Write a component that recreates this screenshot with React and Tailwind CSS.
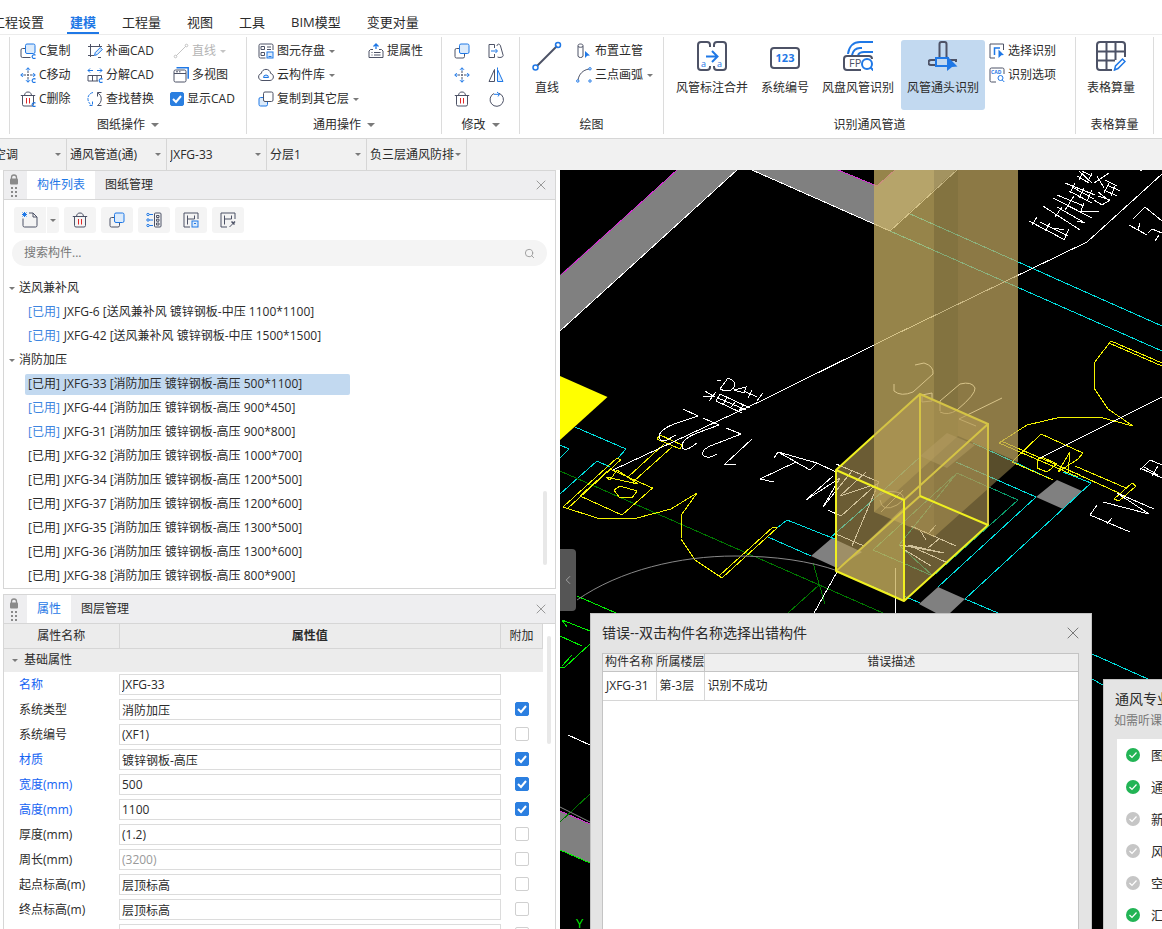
import React, { useState } from 'react';
import { X, Search, ChevronLeft } from 'lucide-react';

const DARK = '#4d5266';
const BLUE = '#1f78e6';
const PALE = '#dcebfb';

// Shared wrapper for the line icons, everything inside inherits the dark stroke
const Svg = ({ size = 16, box = 16, w = 1, children }) => (
  <svg width={size} height={size} viewBox={`0 0 ${box} ${box}`} fill="none" stroke={DARK} strokeWidth={w} className="shrink-0" aria-hidden="true">
    {children}
  </svg>
);

// Small blue "c" mark in the corner of the CAD commands
const CMark = () => <path d="M15.5 12.2c-1.6-1.2-3.6 0-3.3 1.8.3 1.5 2 2 3.3 1" stroke={BLUE} strokeWidth="1.2" />;

const CopyIcon = ({ c }) => (
  <Svg>
    <path d={c ? 'M5 5.500H2.500A1.500 1.500 0 0 0 1 7v6a1.500 1.500 0 0 0 1.500 1.500h8' : 'M5 5.500H2.500A1.500 1.500 0 0 0 1 7v6.500A1.500 1.500 0 0 0 2.500 15H9a1.500 1.500 0 0 0 1.500-1.500V11'} />
    <rect x="5.500" y="1" width="9.500" height="9.500" rx="1.500" fill={PALE} stroke={BLUE} />
    {c && <CMark />}
  </Svg>
);

const MoveIcon = ({ c }) => (
  <Svg>
    <path d="M8 4v8M4 8h8" strokeDasharray="2 1" />
    <path d="M8 .8v3M8 12.200v3M.8 8h3M12.200 8h3M6 2.800 8 .8l2 2M6 13.200l2 2 2-2M2.800 6l-2 2 2 2M13.200 6l2 2-2 2" stroke={BLUE} />
    {c && <CMark />}
  </Svg>
);

const TrashIcon = ({ c }) => (
  <Svg>
    <path d="M.8 4.500h14.400M4.500 4.300C5 1.800 6 1 8 1s3 .8 3.500 3.300M2.500 4.500v9A1.500 1.500 0 0 0 4 15h8a1.500 1.500 0 0 0 1.500-1.500v-9" />
    <path d="M6.500 7v5.500M9.500 7v5.500" stroke="#e02828" />
    {c && <CMark />}
  </Svg>
);

const DrawCadIcon = () => (
  <Svg>
    <path d="M3.500 1v13M1 3.500h14M12.500 1v3M1 12.500h6M14 14.500h-3" />
    <path d="m7.500 12.500.8-3 5-5 2 2-5 5z" stroke={BLUE} fill={PALE} />
  </Svg>
);

const SplitCadIcon = () => (
  <Svg>
    <path d="M1 3.500h5M3 1.500l-2 2 2 2M10 3.500h5M13 1.500l2 2-2 2" stroke={BLUE} />
    <path d="M1 14V8.500h13.500V11M1 14h10M5.500 8.500V14M10 8.500V14" />
    <CMark />
  </Svg>
);

const SwapIcon = () => (
  <Svg>
    <path d="M6 1.500C-.5 3-.5 11 4.500 14M5.500 10.500V14.500H1.500" stroke={BLUE} strokeDasharray="3 1" />
    <path d="M10.500 5.500v-4h4M10.500 2c5 2 5 9.500 0 12.500h4" />
  </Svg>
);

const LineIcon = () => (
  <Svg>
    <path d="m3 13 10-10" stroke="#c4c4c4" />
    <circle cx="2.500" cy="13.500" r="1.300" stroke="#c4c4c4" />
    <circle cx="13.500" cy="2.500" r="1.300" stroke="#c4c4c4" />
  </Svg>
);

const ViewsIcon = () => (
  <Svg>
    <path d="M3.500.8h11.700v11" stroke={BLUE} strokeWidth="1.500" />
    <rect x="1" y="3" width="12" height="12" rx="1.500" />
    <path d="M1 6.500h12M3 4.800h2M6 4.800h1.500" />
  </Svg>
);

const StoreIcon = () => (
  <Svg>
    <path d="M7.500 15H2.500A1.500 1.500 0 0 1 1 13.500v-11A1.500 1.500 0 0 1 2.500 1h11A1.500 1.500 0 0 1 15 2.500V7M3 3.500h3.500v3H3zM3 9.500h3.500v3H3zM9 4h4M9 6.500h4" />
    <rect x="9" y="9" width="6" height="6" fill={PALE} stroke={BLUE} />
    <path d="M10.500 13.500h3" stroke={BLUE} />
  </Svg>
);

const CloudIcon = () => (
  <Svg>
    <path d="M4 13.500C-.5 13-.3 7 3.300 6.500 4 1 12 1 12.700 6.500c3.600.5 3.800 6.500-.7 7z" />
    <path d="M5.500 10.500h5a2.500 2.500 0 0 0-5 0z" fill={PALE} stroke={BLUE} />
  </Svg>
);

const CopyToIcon = () => (
  <Svg>
    <path d="M5 6.500H2.500A1.500 1.500 0 0 0 1 8v5.500A1.500 1.500 0 0 0 2.500 15H8a1.500 1.500 0 0 0 1.500-1.500V11" stroke={BLUE} fill={PALE} />
    <rect x="5.500" y="1" width="9.500" height="9.500" rx="1.500" fill="#fff" />
  </Svg>
);

const LiftIcon = () => (
  <Svg>
    <path d="M8 6V1M5.500 3.500 8 1l2.500 2.500" stroke={BLUE} strokeWidth="1.300" />
    <path d="M5 6.500H2.500L1 8v6.500h14V8l-1.500-1.500H11M3.500 9.500h1M6 9.500h6.500M3.500 12h1M6 12h6.500" />
  </Svg>
);

const StretchIcon = () => (
  <Svg>
    <path d="M6.500 1.500H1v13h5.500M6.500 1.500V5M6.500 11v3.500M9 3c0-2.500 3-2.500 3.500 0l2.700 9.500c0 2-4 2.500-5.700 1.500" />
    <path d="M3 8h6M7.500 6l2 2-2 2" stroke={BLUE} />
  </Svg>
);

const MirrorIcon = () => (
  <Svg>
    <path d="M6.500 2.500v12H1z" />
    <path d="M9.500 2.500v12H15zM9.500 .5v2" stroke={BLUE} fill={PALE} />
  </Svg>
);

const RotateIcon = () => (
  <Svg>
    <path d="M11 2.300a6.700 6.700 0 1 1-5 .2" />
    <path d="M6 3.300h5M9 1l2.500 2.200L10 5.500" stroke={BLUE} />
  </Svg>
);

const PipeIcon = () => (
  <Svg>
    <path d="M2 2.500v10.500c0 2 5 2 5 0V2.500c0-2-5-2-5 0zM2 3.500c1 1 4 1 5 0" />
    <path d="M9 8l5 4.500-2.800.3L9 15z" fill={BLUE} stroke="none" />
  </Svg>
);

const ArcIcon = () => (
  <Svg>
    <path d="M2 13C3 7 7 3 13 2" />
    <g stroke={BLUE} fill="#fff">
      <circle cx="1.800" cy="14" r="1.200" />
      <circle cx="14" cy="1.800" r="1.200" />
      <circle cx="14" cy="14" r="1.200" />
    </g>
  </Svg>
);

const PickIcon = () => (
  <Svg>
    <path d="M6 15H1V1h13.500v6" />
    <path d="M5.500 12V5H11" stroke={BLUE} strokeWidth="1.500" />
    <path d="M9.500 6.500l5.500 5.500-2.700.3-2.800 2.700z" fill={BLUE} stroke="none" />
  </Svg>
);

const OptionIcon = () => (
  <Svg>
    <path d="M7 15H2.500A1.500 1.500 0 0 1 1 13.500v-11A1.500 1.500 0 0 1 2.500 1h11A1.500 1.500 0 0 1 15 2.500V7" />
    <text x="2" y="7" fontSize="5" fontWeight="700" fill={BLUE} stroke="none">CAD</text>
    <circle cx="11.500" cy="11" r="2.500" stroke={BLUE} />
    <path d="m13.300 13 2 2" stroke={BLUE} />
  </Svg>
);

const BigLineIcon = () => (
  <Svg size={30} box={30} w={2}>
    <path d="M5 25 25 5" />
    <circle cx="3.500" cy="26.500" r="2.500" stroke={BLUE} strokeWidth="1.500" />
    <circle cx="26" cy="4" r="2.500" stroke={BLUE} strokeWidth="1.500" />
  </Svg>
);

const MergeIcon = () => (
  <Svg size={30} box={30} w={2}>
    <path d="M13 6V4a3 3 0 0 0-3-3H4a3 3 0 0 0-3 3v22a3 3 0 0 0 3 3h6a3 3 0 0 0 3-3v-1M17 6V4a3 3 0 0 1 3-3h6a3 3 0 0 1 3 3v22a3 3 0 0 1-3 3h-6a3 3 0 0 1-3-3v-1" />
    <path d="M9 15.500h11M15 10l5.500 5.500L15 21" stroke={BLUE} />
    <g fontSize="9" fill={BLUE} stroke="none">
      <text x="4" y="26">a</text>
      <text x="20" y="26">a</text>
    </g>
  </Svg>
);

const NumberIcon = () => (
  <Svg size={30} box={30} w={2}>
    <rect x="1" y="7" width="28" height="20" rx="3" />
    <text x="15" y="21" fontSize="11" fontWeight="700" textAnchor="middle" fill={BLUE} stroke="none">123</text>
  </Svg>
);

const FpIcon = () => (
  <Svg size={30} box={30} w={2}>
    <path d="M5 13C6 5 11 1 17 1h13M9 14c1-4 4-7 8-7h2M15 14c1-2 3-3 6-3h9" stroke={BLUE} />
    <path d="M18 29H4a3 3 0 0 1-3-3v-8a3 3 0 0 1 3-3h22a3 3 0 0 1 3 3" />
    <text x="6" y="26" fontSize="11" fill={DARK} stroke="none">FP</text>
    <circle cx="24" cy="23" r="5" stroke={BLUE} fill="#fff" />
    <path d="m27.500 26.500 3 3" stroke={BLUE} />
  </Svg>
);

const JointIcon = () => (
  <Svg size={30} box={30} w={2}>
    <path d="M11.500 16V3a2 2 0 0 1 2-2h3a2 2 0 0 1 2 2v13M7 19H3a2.300 2.300 0 0 0 0 5h4M22 19h6v2" />
    <rect x="8" y="17" width="12" height="8" fill="#c2d9f0" stroke={BLUE} />
    <path d="M19 15l10.500 10.500-5.500.5-5 4z" fill={BLUE} stroke="none" />
  </Svg>
);

const GridEditIcon = () => (
  <Svg size={30} box={30} w={2}>
    <path d="M16 29H4a3 3 0 0 1-3-3V4a3 3 0 0 1 3-3h22a3 3 0 0 1 3 3v12M1 10.500h28M1 19.500h18M10.500 1v28M19.500 1v18" />
    <path d="m18.500 29 1-4 7-7 2.500 2.500-7 7z" stroke={BLUE} strokeWidth="1.500" />
  </Svg>
);

const NewIcon = () => (
  <Svg>
    <path d="M1 6.500v7A1.500 1.500 0 0 0 2.500 15h11a1.500 1.500 0 0 0 1.500-1.500V5l-4-4H7M11 1v4h4" />
    <path d="m.5 .5 4 4M4.500.5l-4 4M2.500 0v5M0 2.500h5" stroke={BLUE} />
  </Svg>
);

const BatchIcon = () => (
  <Svg>
    <path d="M2 2.500h5M2 8h5M2 13.500h5" stroke={BLUE} />
    <g stroke={BLUE} fill="#f4f4f4">
      <circle cx="2" cy="2.500" r="1.200" /><circle cx="2" cy="8" r="1.200" /><circle cx="2" cy="13.500" r="1.200" />
    </g>
    <rect x="8.500" y="1" width="6.500" height="14" rx="1" />
    <path d="M10.500 3.500h2.500v2h-2.500zM10.500 7.200h2.500v2h-2.500zM10.500 11h2.500v2h-2.500z" />
  </Svg>
);

const SaveTplIcon = () => (
  <Svg>
    <path d="M7 15H1V1h14v6M4.500 12.500v-9M4.500 7h7M11.500 3.500V7" />
    <rect x="9" y="9" width="6" height="6" fill={PALE} stroke={BLUE} />
    <path d="M11 11.500h2" stroke={BLUE} />
  </Svg>
);

const PickTplIcon = () => (
  <Svg>
    <path d="M7 15H1V1h14v6M4.500 12.500v-9M4.500 7h7M11.500 3.500V7M9.500 15l4-4" />
    <path d="M11.500 9.500l3 3M13 11.500l2-2" strokeWidth="1.500" />
  </Svg>
);

const Caret = ({ big, light }) => (
  <svg width={big ? 8 : 6} height={big ? 4 : 3} viewBox="0 0 8 4" className="shrink-0" aria-hidden="true">
    <path d="M0 0h8L4 4z" fill={light ? '#c4c4c4' : '#7a7a7a'} />
  </svg>
);

const Check = ({ checked, label }) => {
  const [on, setOn] = useState(!!checked);
  return (
    <span className="relative inline-flex h-[14px] w-[14px] shrink-0">
      <input
        type="checkbox"
        aria-label={label}
        checked={on}
        onChange={e => setOn(e.target.checked)}
        className="h-full w-full appearance-none rounded-[2px] border border-[#d0d0d0] bg-white checked:border-[#2b7fe0] checked:bg-[#2b7fe0]"
      />
      {on && (
        <svg viewBox="0 0 14 14" className="pointer-events-none absolute inset-0" fill="none" stroke="#fff" strokeWidth="2">
          <path d="m3 7 3 3 5-6" />
        </svg>
      )}
    </span>
  );
};

const Tool = ({ icon, text, caret, off }) => (
  <button type="button" className={'flex h-6 items-center gap-[3px] whitespace-nowrap ' + (off ? 'text-[#b4b4b4]' : '')}>
    {icon}
    <span>{text}</span>
    {caret && <span className="ml-px"><Caret light={off} /></span>}
  </button>
);

const BigTool = ({ icon, text, active }) => (
  <button type="button" className={'flex h-[70px] flex-col items-center gap-[7px] rounded-[3px] px-[6px] pt-px whitespace-nowrap ' + (active ? 'bg-[#c2d9f0]' : '')}>
    {icon}
    <span className="leading-5">{text}</span>
  </button>
);

const Group = ({ title, caret, className, children }) => (
  <section className={'flex shrink-0 flex-col border-r border-[#dcdcdc] ' + className}>
    <div className="flex flex-1 pt-[2px]">{children}</div>
    <div className="flex h-[19px] items-center justify-center gap-[6px]">
      {title}
      {caret && <Caret big />}
    </div>
  </section>
);

const menus = ['工程设置', '建模', '工程量', '视图', '工具', 'BIM模型', '变更对量'];
const filters = [
  ['专业', '通风空调'],
  ['构件类型', '通风管道(通)'],
  ['构件', 'JXFG-33'],
  ['分层', '分层1'],
  ['图纸', '负三层通风防排'],
];

const Ribbon = () => (
  <div className="flex shrink-0 overflow-hidden border-b border-[#d6d6d6] bg-white pt-[2px] pb-1 pl-[9px]">
    <div className="w-px shrink-0 bg-[#dcdcdc]" />
    <Group title="图纸操作" caret className="h-[97px] w-[237px]">
      <div className="ml-[10px] w-[67px]">
        <Tool icon={<CopyIcon c />} text="C复制" />
        <Tool icon={<MoveIcon c />} text="C移动" />
        <Tool icon={<TrashIcon c />} text="C删除" />
      </div>
      <div className="w-[83px]">
        <Tool icon={<DrawCadIcon />} text="补画CAD" />
        <Tool icon={<SplitCadIcon />} text="分解CAD" />
        <Tool icon={<SwapIcon />} text="查找替换" />
      </div>
      <div>
        <div className="pl-[3px]">
          <Tool icon={<LineIcon />} text="直线" caret off />
          <Tool icon={<ViewsIcon />} text="多视图" />
        </div>
        <label className="flex h-6 items-center gap-[3px]">
          <Check checked label="显示CAD" />
          显示CAD
        </label>
      </div>
    </Group>
    <Group title="通用操作" caret className="w-[195px]">
      <div className="ml-[11px] w-[110px]">
        <Tool icon={<StoreIcon />} text="图元存盘" caret />
        <Tool icon={<CloudIcon />} text="云构件库" caret />
        <Tool icon={<CopyToIcon />} text="复制到其它层" caret />
      </div>
      <Tool icon={<LiftIcon />} text="提属性" />
    </Group>
    <Group title="修改" caret className="w-[78px]">
      <div className="ml-3 grid w-[50px] grid-cols-2 content-start justify-between gap-x-[17px]">
        {[[CopyIcon, '复制'], [StretchIcon, '拉伸'], [MoveIcon, '移动'], [MirrorIcon, '镜像'], [TrashIcon, '删除'], [RotateIcon, '旋转']].map(([Icon, name]) => (
          <button key={name} type="button" aria-label={name} className="flex h-6 w-4 items-center"><Icon /></button>
        ))}
      </div>
    </Group>
    <Group title="绘图" className="w-[144px]">
      <div className="ml-[6px] pt-px"><BigTool icon={<BigLineIcon />} text="直线" /></div>
      <div className="ml-2">
        <Tool icon={<PipeIcon />} text="布置立管" />
        <Tool icon={<ArcIcon />} text="三点画弧" caret />
      </div>
    </Group>
    <Group title="识别通风管道" className="w-[412px]">
      <div className="ml-[6px] flex gap-px pt-px">
        <BigTool icon={<MergeIcon />} text="风管标注合并" />
        <BigTool icon={<NumberIcon />} text="系统编号" />
        <BigTool icon={<FpIcon />} text="风盘风管识别" />
        <BigTool icon={<JointIcon />} text="风管通头识别" active />
      </div>
      <div className="ml-1">
        <Tool icon={<PickIcon />} text="选择识别" />
        <Tool icon={<OptionIcon />} text="识别选项" />
      </div>
    </Group>
    <Group title="表格算量" className="w-[78px]">
      <div className="ml-[5px] pt-px"><BigTool icon={<GridEditIcon />} text="表格算量" /></div>
    </Group>
  </div>
);

const PanelTabs = ({ tabs }) => (
  <div className="flex h-[29px] shrink-0 items-stretch border-b border-[#d6d6d6] bg-[#eeeef0]">
    <div className="flex w-[23px] flex-col items-center pt-[3px] pr-[3px]">
      <svg width="10" height="23" viewBox="0 0 10 23" aria-hidden="true">
        <path d="M2.500 5V3.500a2.500 2.500 0 0 1 5 0V5" fill="none" stroke="#8a8a8a" strokeWidth="1.300" />
        <rect x="1" y="4.500" width="8" height="6" rx="1" fill="#8a8a8a" />
        <path d="M2 13h2v2H2zM6 13h2v2H6zM2 17h2v2H2zM6 17h2v2H6zM2 21h2v2H2zM6 21h2v2H6z" fill="#8a8a8a" />
      </svg>
    </div>
    {tabs.map((tab, i) => (
      <button key={tab} type="button" className={'px-[10px] ' + (i === 0 ? 'bg-white text-[#1f78e6]' : '')}>{tab}</button>
    ))}
    <button type="button" aria-label="关闭" className="mr-[6px] ml-auto text-[#999]"><X size={16} strokeWidth={1.500} /></button>
  </div>
);

const groups = [
  {
    name: '送风兼补风',
    items: [
      ['JXFG-6 [送风兼补风 镀锌钢板-中压 1100*1100]', true],
      ['JXFG-42 [送风兼补风 镀锌钢板-中压 1500*1500]', true],
    ],
  },
  {
    name: '消防加压',
    items: [
      ['JXFG-33 [消防加压 镀锌钢板-高压 500*1100]', false, true],
      ['JXFG-44 [消防加压 镀锌钢板-高压 900*450]', true],
      ['JXFG-31 [消防加压 镀锌钢板-高压 900*800]', true],
      ['JXFG-32 [消防加压 镀锌钢板-高压 1000*700]'],
      ['JXFG-34 [消防加压 镀锌钢板-高压 1200*500]'],
      ['JXFG-37 [消防加压 镀锌钢板-高压 1200*600]'],
      ['JXFG-35 [消防加压 镀锌钢板-高压 1300*500]'],
      ['JXFG-36 [消防加压 镀锌钢板-高压 1300*600]'],
      ['JXFG-38 [消防加压 镀锌钢板-高压 800*900]'],
    ],
  },
];

const ComponentPanel = () => (
  <section className="relative border border-[#d6d6d6] bg-white">
    <PanelTabs tabs={['构件列表', '图纸管理']} />
    <div className="flex gap-[5px] px-[10px] pt-[7px]">
      <div className="flex gap-px">
        <button type="button" aria-label="新建" className="flex h-[26px] w-8 items-center justify-center rounded-l-[3px] bg-[#f4f4f4]"><NewIcon /></button>
        <button type="button" aria-label="更多" className="flex h-[26px] w-3 items-center justify-center rounded-r-[3px] bg-[#f4f4f4]"><Caret /></button>
      </div>
      {[[TrashIcon, '删除'], [CopyIcon, '复制'], [BatchIcon, '批量'], [SaveTplIcon, '存档'], [PickTplIcon, '提取']].map(([Icon, name]) => (
        <button key={name} type="button" aria-label={name} className="flex h-[26px] w-8 items-center justify-center rounded-[3px] bg-[#f4f4f4]"><Icon /></button>
      ))}
    </div>
    <div className="mx-2 mt-[7px] flex h-[26px] items-center rounded-full bg-[#f4f4f4] pr-3 pl-3">
      <input type="text" aria-label="搜索构件" placeholder="搜索构件..." className="flex-1 bg-transparent outline-none placeholder:text-[#777]" />
      <Search size={11} color="#999" />
    </div>
    <ul className="mt-[10px]">
      {groups.map(g => (
        <li key={g.name}>
          <div className="flex h-6 items-center gap-1 pl-[5px]"><Caret />{g.name}</div>
          <ul>
            {g.items.map(([text, blue, active]) => (
              <li key={text} className="flex h-6 items-center pl-[21px]">
                <button type="button" className={'flex h-[21px] w-[325px] items-center gap-1 rounded-[2px] pl-[3px] whitespace-nowrap ' + (active ? 'bg-[#c2d9f0]' : '')}>
                  <span className={blue ? 'text-[#3d85e0]' : ''}>[已用]</span>
                  <span>{text}</span>
                </button>
              </li>
            ))}
          </ul>
        </li>
      ))}
    </ul>
    <div className="absolute right-2 bottom-[23px] h-[74px] w-1 rounded-full bg-[#e8e8e8]" />
  </section>
);

// name, value, link colour, checkbox state (null = no checkbox)
const props = [
  ['名称', 'JXFG-33', true, null],
  ['系统类型', '消防加压', false, true],
  ['系统编号', '(XF1)', false, false],
  ['材质', '镀锌钢板-高压', true, true],
  ['宽度(mm)', '500', true, true],
  ['高度(mm)', '1100', true, true],
  ['厚度(mm)', '(1.2)', false, false],
  ['周长(mm)', '(3200)', false, false],
  ['起点标高(m)', '层顶标高', false, false],
  ['终点标高(m)', '层顶标高', false, false],
  ['', '', false, false],
];

const PropertyPanel = () => (
  <section className="relative mt-[5px] min-h-0 flex-1 overflow-hidden border border-b-0 border-[#d6d6d6] bg-white">
    <PanelTabs tabs={['属性', '图层管理']} />
    <div className="pr-3">
      <table className="w-full table-fixed border-collapse">
        <thead>
          <tr className="h-6 border-b border-[#d6d6d6] bg-[#ececec]">
            <th className="w-[115px] border-r border-[#d6d6d6] font-normal">属性名称</th>
            <th className="border-r border-[#d6d6d6] font-bold">属性值</th>
            <th className="w-[42px] border-r border-[#d6d6d6] font-normal">附加</th>
          </tr>
        </thead>
        <tbody>
          <tr className="h-6 bg-[#ececec]">
            <td colSpan="3"><div className="flex items-center gap-[6px] pl-2"><Caret />基础属性</div></td>
          </tr>
          {props.map(([name, value, link, on], i) => (
            <tr key={i} className="h-[25px]">
              <td className={'pl-[15px] ' + (link ? 'text-[#1463f3]' : '')}>{name}</td>
              <td>
                <input
                  type="text"
                  aria-label={name || '属性值'}
                  defaultValue={value}
                  className={'block h-[21px] w-full border border-[#dcdcdc] bg-white px-[2px] outline-none ' + (value === '(3200)' ? 'text-[#999]' : '')}
                />
              </td>
              <td className="text-center leading-none">{on !== null && <Check checked={on} label={name + '附加'} />}</td>
            </tr>
          ))}
        </tbody>
      </table>
    </div>
    <div className="absolute top-[41px] right-1 h-[108px] w-1 rounded-full bg-[#e8e8e8]" />
  </section>
);

// The model view: CAD underlay first, then the translucent duct and the selected box
const ModelView = () => (
  <svg className="absolute inset-0 h-full w-full" viewBox="560 170 602 759" preserveAspectRatio="xMinYMin slice" fill="none" strokeWidth="1">
    <g fill="#808080">
      <path d="M677 170h60L560 331v-56z" />
      <path d="M752 170h86l39 16 18-16h61l-67 61z" />
      <path d="M811 556l21-18 30 14-25 16zM1057 480l25 11-19 18-27-12zM938 587l27 12-15 14h-14l-17-9z" />
      <path d="M560 811l30 13v39l-30-13z" />
    </g>
    <path d="M560 376l47.500 21L560 440z" fill="#ff0" />
    <g shapeRendering="crispEdges">
      <path d="M561 275 677 170M838 170l39 16 18-16M560 811l30 13" stroke="#d030d0" />
      <g stroke="#00dede">
        <path d="M908 213l254 113M890 231l272 120M575 427l51 22-8 9M560 445l9 4-9 9M560 494l37-33 13 6" />
        <path d="M777 528l10-8 48 19M768 537l43 19M838 572l52 22M973 443l80 37M1063 472l28 11-126 116 33 14M956 462l80 35-98 90M873 500l47-43M830 538l43-38M904 596l16 7M1092 654l56 25M1092 679l11 6" />
      </g>
      <path d="M957 473l61 27-85 76-60-26zM957 473l-58 72 34 31" stroke="#0a9a6a" />
      <path d="M560 471 883 613M813 563l12 41M819 585l-31 28M590 794l-30 28" stroke="#007800" />
      <path d="M577 596l39 17M562 620l28 11M562 620l5 7M560 636l22 10M590 644l-25 23h-5M562 666l10-11M560 850l30 13" stroke="#00f000" />
      <g stroke="#f4f400">
        <path d="M563 507l54-49 3.500 2L567 509M580 496l42 19 30.500-27L610 469zM606 477l32 7-21-14-7 10zM614 490l6-4 17 5-5 7-13-1zM628 477l36-33M634 481l38-34M660 435l22 10-2 4-23-10z" />
        <path d="M563 507l34 11h40l34-9 26-16-15 21-1 25 14 21 27 18 55-50-4-1-54 49" />
        <path d="M1162 363l-51-22-17 22v25l14 21 25 17-34-9h-38l-34 8-28 18 79 34M1109 343l53 23M1001 441l79 34" />
        <path d="M1041 434l42 19-5 6-20 13 12-20-2 20M1041 434l-29 28 41 18M1037 460v8l10 4 10-8-15-7zM1075 466l51 22M1068 470l51 23M1132 483l4 3-17 15-5-2z" />
      </g>
    </g>
    <text x="576" y="928" fontSize="13" fill="#00f000">Y</text>
    <path d="M577 600C620 570 680 556 735 556c40 0 75 5 103 15M560 807l30 15" stroke="#888" />
    <g stroke="#fff" shapeRendering="crispEdges">
      <path d="M560 331 737 170M752 170l138 61 67-61M613 470l150-70 127-63 197-95 75-68M1040 458l122-61M837 572l-23 41M895 613v-45M568 735l22 10" />
      <path d="M683 409l15 7-24 8q-15 6-15 13 2 8 13 0l4-2M703 418l16 7-22 8q-15 6-15 13 1 8 15-3M726 428l15 6-23 9q-18 6-15 12 4 5 14-1M752 439l-27 25h11" />
      <path d="M774 482l-14-3 36-17-18-10-4 6M778 452l39 11-7 7zM817 463l19 9M833 476l-27 24 34-22-17 29 29-36M866 472l-26 24 30-10M828 510l13 6 38-34-43-18M879 482l-27 64M836 534l28 12" />
      <path d="M717 380l4 1M728 378l-8 11q10 5 15-3 1-5-7-8M734 390l12-3-2 6zM744 391l13 6M752 390l-4 8M757 401l6-8M703 396l10 0-8-5M716 392l-7 9M720 394l30 14M718 398l28 12M716 401l26 12M720 394l-4 7M727 397l-4 8M736 401l-5 6M744 404l-5 7" />
      <path d="M911 526l45 20M900 545l44 8-36-8 40 18M905 550l26 16M920 530l6 10M928 534l8-9M940 538l-12 10" />
      <path d="M1103 502l46 12-32-21 37 16M1097 505l-7 10 40 17M1112 518l-5 6M1140 468l22 10M1150 460l-10 10M1150 460l12 5M1144 467l14 8M1158 466l-6 10" />
      <path d="M1029 221l36 19M1037 217l-5 8M1040 222l28 14M1050 223l-5 8M1069 229l-5 11M1054 228l10 2" />
      <path d="M1043 206l37 24M1062 207l-7 10M1057 207l28 16-8-2M1053 198l39 20M1057 195l27 11M1074 196l-9 14M1084 203l-3 8h18" />
      <path d="M1065 183l30 12M1075 183l-5 10M1069 191l23 12M1084 188l-5 10M1092 190l-5 11M1072 187l22 12M1094 200l8 5 8-5-12-4M1098 192l8 6" />
      <path d="M1079 171l13 12M1082 171l10 5M1077 176l12 7M1084 171l-5 9M1092 173l-5 10M1094 183l15-10M1097 176l7 12M1104 190l13 6M1107 185l13 6M1109 183l-5 10M1115 186l-4 10M1105 180l12 6" />
      <path d="M1133 219l12-12 17 14M1129 225l18 10M1140 223l-2 7M1148 233l4-4 10 4M1159 235l-4 6M1140 170h2" />
    </g>
    <path d="M874 170h84v266l-84 76z" fill="#ac9754" fillOpacity=".5" />
    <path d="M958 170h60v292l-60-26z" fill="#d0b26a" fillOpacity=".5" />
    <path d="M874 170h60v367l-60-25z" fill="#d6bb6a" fillOpacity=".5" />
    <path d="M934 170h84v292l-84 75z" fill="#b09a56" fillOpacity=".5" />
    <path d="M947 433l28 12-28 23-27-12z" fill="#b8a474" fillOpacity=".5" />
    <g stroke="#d8c48a">
      <path d="M915 365l9-2q10 3 9 11l-20 18q-12 5-19-1v-7M940 411v-10l20-17q12-3 15 4 1 6-18 22-9 6-17 2M1002 398l-43 21 17 7M922 395l10-2v8l-10 1z" />
      <path d="M880 495q8-6 20-2 8 5-3 12-15 8-17-5M903 490l-22 22" />
    </g>
    <path d="M836 470l84-76 68 30v101l-84 76-68-29z" fill="#b29957" fillOpacity=".6" />
    <path d="M836 571l68-64v94z" fill="#d6be62" fillOpacity=".5" />
    <g stroke="#d4c345" strokeWidth="2">
      <path d="M874 435.500l46-41.500 68 30v101M920 394v102M904 500l84-76M836 571l84-75" />
    </g>
    <path d="M874 435.500 836 470v101l68 30 84-76-68-29M836 470l68 30v101" stroke="#f0f020" strokeWidth="2" strokeLinejoin="round" />
  </svg>
);

const ErrorDialog = () => (
  <div role="dialog" aria-labelledby="error-title" className="absolute top-[443px] bottom-0 left-[30px] flex w-[502px] flex-col border border-b-0 border-[#c4c4c4] bg-[#e4e4e4] pr-3 pl-[11px]">
    <div className="flex h-[39px] shrink-0 items-center justify-between pb-px">
      <h2 id="error-title" className="text-[14px]">错误--双击构件名称选择出错构件</h2>
      <button type="button" aria-label="关闭" className="-mr-1 text-[#777]"><X size={20} strokeWidth={1.200} /></button>
    </div>
    <div className="flex-1 border border-b-0 border-[#c4c4c4] bg-white">
      <table className="w-full table-fixed border-collapse">
        <thead>
          <tr className="h-[17px] border-b border-[#c4c4c4] bg-[#efefef] leading-4 whitespace-nowrap">
            <th className="w-[53px] border-r border-[#c4c4c4] pl-[2px] text-left font-normal">构件名称</th>
            <th className="w-12 border-r border-[#c4c4c4] text-left font-normal">所属楼层</th>
            <th className="font-normal">错误描述</th>
          </tr>
        </thead>
        <tbody>
          <tr className="h-[29px] border-b border-[#d6d6d6] whitespace-nowrap">
            <td className="border-r border-[#d6d6d6] pl-[3px]">JXFG-31</td>
            <td className="border-r border-[#d6d6d6] pl-[3px]">第-3层</td>
            <td className="pl-[3px]">识别不成功</td>
          </tr>
        </tbody>
      </table>
    </div>
  </div>
);

const steps = [['图', true], ['通', true], ['新', false], ['风', false], ['空', false], ['汇', true]];

const GuidePanel = () => (
  <aside className="absolute top-[509px] right-0 bottom-0 left-[543px] overflow-hidden border-t border-l border-[#c4c4c4] bg-[#e4e4e4] pt-[9px] whitespace-nowrap">
    <h2 className="pl-[11px] text-[14px] leading-5">通风专业</h2>
    <p className="pl-[10px] leading-6 text-[#777]">如需听课</p>
    <ul className="mt-[6px] ml-[13px] h-full bg-white">
      {steps.map(([text, done]) => (
        <li key={text} className="flex h-8 items-center gap-[11px] pl-[9px] text-[13px]">
          <svg width="14" height="14" viewBox="0 0 14 14" className="shrink-0" aria-hidden="true">
            <circle cx="7" cy="7" r="7" fill={done ? '#22b455' : '#c6c6c6'} />
            <path d="m3.500 7 2.500 2.500 4.500-5" fill="none" stroke="#fff" strokeWidth="1.200" />
          </svg>
          {text}
        </li>
      ))}
    </ul>
  </aside>
);

const App = () => {
  const [menu, setMenu] = useState('建模');

  return (
    <div className="flex h-screen flex-col overflow-hidden bg-white font-['Open_Sans','Noto_Sans_CJK_SC',sans-serif] text-[12px] leading-4 text-[#2b2b2b]">
      <nav className="flex h-[35px] shrink-0 items-end gap-5 overflow-hidden border-b border-[#ececec]">
        {menus.map((item, i) => (
          <button
            key={item}
            type="button"
            onClick={() => setMenu(item)}
            className={'h-[23px] shrink-0 border-b-2 px-[3px] text-[13px] leading-5 ' + (i === 0 ? '-ml-[11px] ' : '') + (menu === item ? 'border-[#1f78e6] font-bold text-[#1f78e6]' : 'border-transparent')}
          >
            {item}
          </button>
        ))}
      </nav>
      <Ribbon />
      <div className="flex h-[31px] shrink-0 overflow-hidden bg-[#f1f1f1]">
        {filters.map(([label, value], i) => (
          <div key={label} className={'relative h-full w-[100px] shrink-0 border-r border-[#d6d6d6] ' + (i === 0 ? '-ml-[33px]' : '')}>
            <select aria-label={label} className="h-full w-full appearance-none bg-transparent pl-[3px] outline-none">
              <option>{value}</option>
            </select>
            <span className="pointer-events-none absolute top-[14px] right-[5px]"><Caret /></span>
          </div>
        ))}
      </div>
      <main className="flex min-h-0 flex-1">
        <div className="mr-1 ml-[3px] flex w-[553px] shrink-0 flex-col">
          <ComponentPanel />
          <PropertyPanel />
        </div>
        <div className="relative min-w-0 flex-1 overflow-hidden bg-black">
          <ModelView />
          <button type="button" aria-label="收起" className="absolute top-[379px] left-0 flex h-[62px] w-4 items-center justify-center rounded-r-[4px] bg-[#555] text-[#aaa]">
            <ChevronLeft size={14} strokeWidth={1.500} />
          </button>
          <ErrorDialog />
          <GuidePanel />
        </div>
      </main>
    </div>
  );
};

export default App;
